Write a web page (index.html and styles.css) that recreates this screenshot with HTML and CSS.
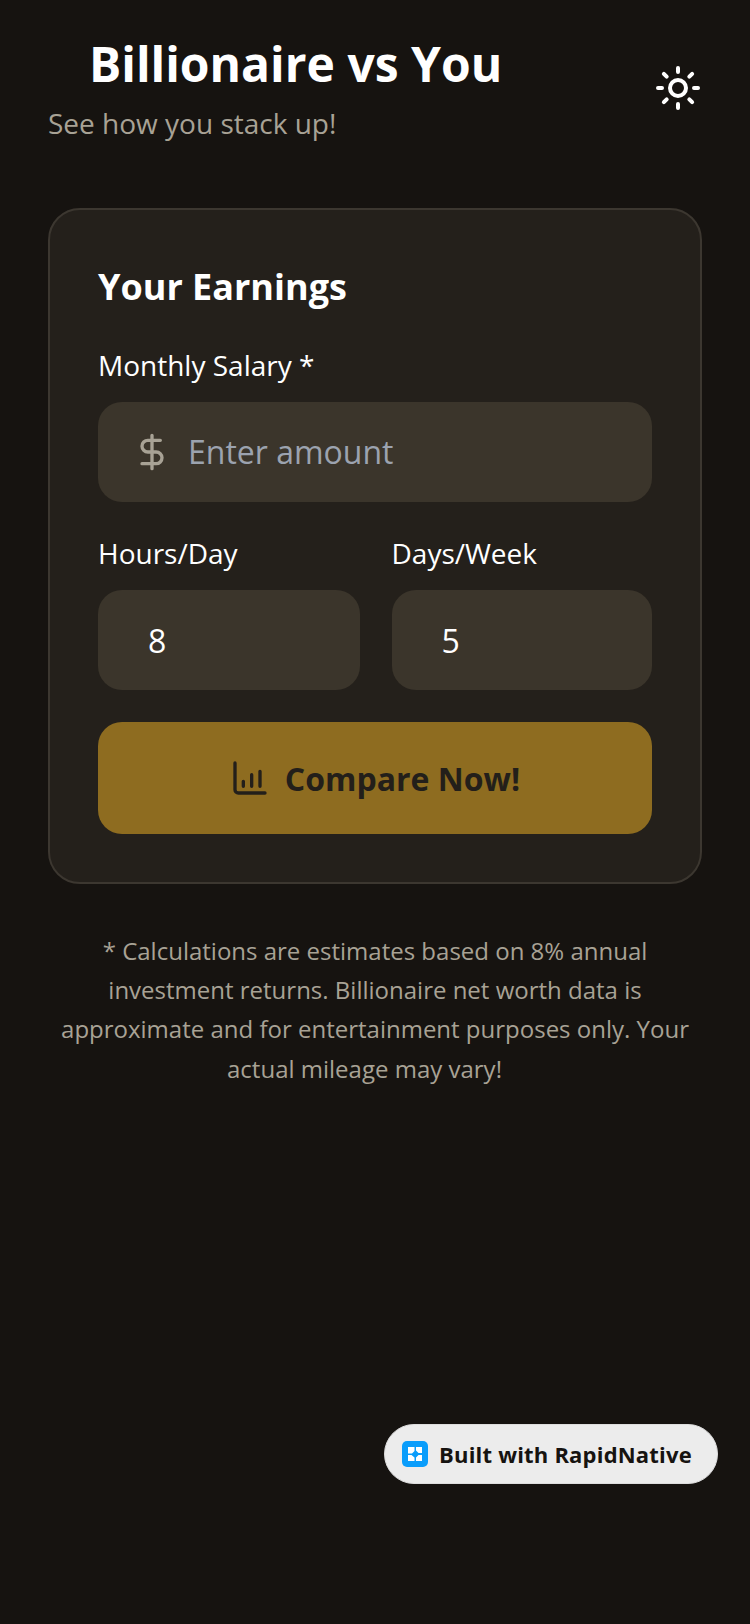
FILE: index.html
```html
<!DOCTYPE html>
<html>
<head>
  <link rel="stylesheet" href="styles.css">
</head>
<body>
  <div class="screen">
    <div class="header">
      <div class="header-text">
        <h1>Billionaire vs You</h1>
        <p>See how you stack up!</p>
      </div>
      <svg class="sun" viewBox="0 0 24 24" fill="none" stroke="#fff" stroke-width="2" stroke-linecap="round" stroke-linejoin="round">
        <circle cx="12" cy="12" r="4"/>
        <path d="M12 2v2M12 20v2M4.93 4.93l1.41 1.41M17.66 17.66l1.41 1.41M2 12h2M20 12h2M6.34 17.66l-1.41 1.41M19.07 4.93l-1.41 1.41"/>
      </svg>
    </div>

    <div class="card">
      <h2>Your Earnings</h2>
      <label class="label">Monthly Salary *</label>
      <div class="input">
        <svg class="dollar" viewBox="0 0 24 24" fill="none" stroke="#a8a295" stroke-width="2" stroke-linecap="round" stroke-linejoin="round">
          <path d="M12 2v20M17 5H9.500a3.500 3.500 0 0 0 0 7h5a3.500 3.500 0 0 1 0 7H6"/>
        </svg>
        <span class="placeholder">Enter amount</span>
      </div>
      <div class="row">
        <div class="col">
          <label class="label">Hours/Day</label>
          <div class="input small">8</div>
        </div>
        <div class="col">
          <label class="label">Days/Week</label>
          <div class="input small">5</div>
        </div>
      </div>
      <button class="compare">
        <svg viewBox="0 0 24 24" fill="none" stroke="#231f1a" stroke-width="2" stroke-linecap="round" stroke-linejoin="round">
          <path d="M3 3v16a2 2 0 0 0 2 2h16M8 17v-3M13 17v-7M18 17V8"/>
        </svg>
        Compare Now!
      </button>
    </div>

    <p class="note">* Calculations are estimates based on 8% annual investment returns. Billionaire net worth data is approximate and for entertainment purposes only. Your actual mileage may vary!<span class="note-end"></span></p>

    <div class="badge">
      <svg class="badge-logo" viewBox="0 0 26 26">
        <rect width="26" height="26" rx="5" fill="#0a9dfb"/>
        <path d="M6 6h6.500v4L10 12.500H6zM14 6h6v6h-3.500L14 9.500zM6 14h3.500l3 2.500V20H6zM16.500 14H20v6h-6v-3.500z" fill="#fff"/>
      </svg>
      <span>Built with RapidNative</span>
    </div>
  </div>
</body>
</html>
```

FILE: styles.css
```css
* {
  margin: 0;
  padding: 0;
  box-sizing: border-box;
}
body {
  background: #161310;
  font-family: "Open Sans", "Noto Sans", sans-serif;
  color: #fff;
}
.screen {
  position: relative;
  width: 750px;
  height: 1624px;
  padding: 32px 48px 0;
}
.header {
  display: flex;
  justify-content: space-between;
  align-items: flex-start;
}
.header-text h1 {
  font-size: 48px;
  line-height: 64px;
  font-weight: 700;
  padding-left: 41px;
}
.header-text p {
  margin-top: 3px;
  font-size: 28px;
  line-height: 48px;
  color: #a8a295;
}
.sun {
  width: 48px;
  height: 48px;
  margin-top: 32px;
}
.card {
  margin-top: 61px;
  background: #24201b;
  border: 2px solid #3c3730;
  border-radius: 32px;
  padding: 48px;
  height: 676px;
}
.card h2 {
  font-size: 36px;
  line-height: 58px;
  font-weight: 700;
  margin-bottom: 29px;
}
.label {
  display: block;
  font-size: 28px;
  line-height: 40px;
  margin-bottom: 17px;
}
.input {
  display: flex;
  align-items: center;
  height: 100px;
  padding: 0 34px;
  background: #3b352b;
  border-radius: 24px;
  font-size: 32px;
  color: #fff;
}
.input.small {
  padding: 0 50px;
}
.dollar {
  width: 40px;
  height: 40px;
  margin-right: 16px;
}
.placeholder {
  padding-bottom: 2px;
  color: #9ca3af;
}
.row {
  display: grid;
  grid-template-columns: 261.5px 1fr;
  gap: 32px;
  margin-top: 31px;
}
.compare {
  display: flex;
  align-items: center;
  justify-content: center;
  gap: 15px;
  width: 100%;
  height: 112px;
  margin-top: 32px;
  border: 0;
  border-radius: 24px;
  background: #8e6c20;
  color: #231f1a;
  font-family: inherit;
  font-size: 32px;
  font-weight: 700;
}
.compare svg {
  width: 40px;
  height: 40px;
}
.note {
  margin-top: 47px;
  text-align: center;
  font-size: 24px;
  line-height: 39.2px;
  color: #a8a295;
}
.note-end {
  display: inline-block;
  width: 21px;
}
.badge {
  position: absolute;
  left: 384px;
  top: 1424px;
  width: 334px;
  height: 60px;
  display: flex;
  align-items: center;
  gap: 11px;
  padding-left: 17px;
  background: #ececec;
  border: 1px solid #ddd;
  border-radius: 30px;
  font-size: 22px;
  font-weight: 700;
  letter-spacing: 0.2px;
  color: #161310;
}
.badge-logo {
  width: 26px;
  height: 26px;
}
```
